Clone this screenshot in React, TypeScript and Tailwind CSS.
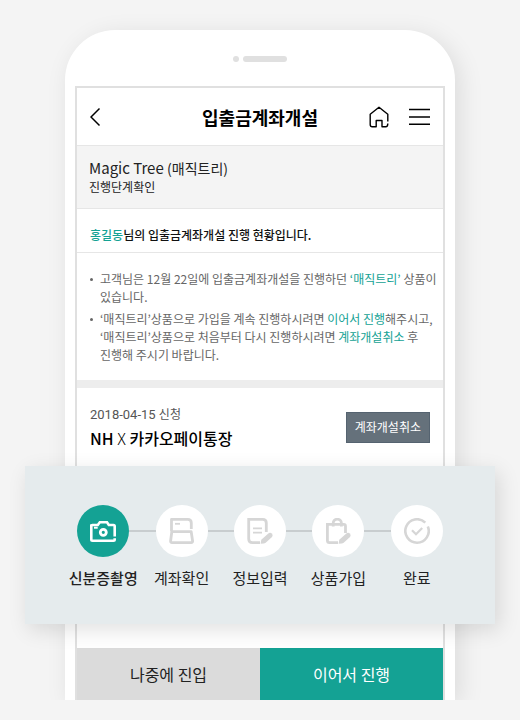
import type { ReactNode } from "react";

type Step = { label: string; icon: ReactNode; active?: boolean };

function CameraIcon() {
  return (
    <svg width="26" height="26" viewBox="0 0 26 26" fill="none" stroke="currentColor" strokeWidth="2.6" aria-hidden="true">
      <path d="M24.7 18.5V8.2Q24.7 7 23.5 7H18.8L17 4.3H9.8L7.8 7H2.6L1.3 7.4V21.5Q1.3 22.7 2.5 22.7H23.5Q24.7 22.7 24.7 21.5V20.3" />
      <circle cx="13.3" cy="14.3" r="3" strokeWidth="2.8" />
      <path d="M4 9.7H7.7" strokeWidth="2" />
    </svg>
  );
}

function AccountIcon() {
  return (
    <svg width="26" height="26" viewBox="0 0 26 26" fill="none" stroke="currentColor" strokeWidth="2.8" strokeLinejoin="round" aria-hidden="true">
      <path d="M22.3 11V5Q22.3 1.4 18.7 1.4H2.5V13.2" />
      <path d="M2.8 13.7H22.2L23.6 23Q23.8 24.6 22.2 24.6H3Q1.4 24.6 1.6 23Z" />
      <path d="M6 5.8H11" strokeWidth="1.8" />
    </svg>
  );
}

function DocumentIcon() {
  return (
    <svg width="26" height="26" viewBox="0 0 26 26" fill="none" stroke="currentColor" strokeWidth="2.8" aria-hidden="true">
      <path d="M19.3 14V5Q19.3 1.4 15.7 1.4H1.7V20.7Q1.7 24.6 5.5 24.6H13" />
      <path d="M6 10.3H15M6 14.7H15" strokeWidth="1.8" />
      <path d="M13.6 25.8L14.3 21.8L21 15.7Q23 14.2 24.8 15.4Q26.3 17.2 25 19L18.4 24.9Q17.6 25.6 13.6 25.8Z" fill="currentColor" stroke="none" />
    </svg>
  );
}

function BagIcon() {
  return (
    <svg width="26" height="26" viewBox="0 0 26 26" fill="none" stroke="currentColor" strokeWidth="2.8" aria-hidden="true">
      <path d="M20.5 15V8.2Q20.5 6.4 18.7 6.4H2.4V22.5Q2.4 24.6 4.5 24.6H13" />
      <path d="M8.2 8.5V5.2A4.1 4 0 0 1 16.4 5.2V8.5" />
      <path d="M13.6 25.8L14.3 21.8L21 15.7Q23 14.2 24.8 15.4Q26.3 17.2 25 19L18.4 24.9Q17.6 25.6 13.6 25.8Z" fill="currentColor" stroke="none" />
    </svg>
  );
}

function DoneIcon() {
  return (
    <svg width="26" height="26" viewBox="0 0 26 26" fill="none" stroke="currentColor" strokeWidth="2.6" aria-hidden="true">
      <path d="M21.3 4.7A11.7 11.7 0 1 0 23.8 8.4" />
      <path d="M8 12.3L12 16.3L18.2 10" strokeWidth="2.2" />
    </svg>
  );
}

const steps: Step[] = [
  { label: "신분증촬영", icon: <CameraIcon />, active: true },
  { label: "계좌확인", icon: <AccountIcon /> },
  { label: "정보입력", icon: <DocumentIcon /> },
  { label: "상품가입", icon: <BagIcon /> },
  { label: "완료", icon: <DoneIcon /> },
];

function Accent({ children }: { children: ReactNode }) {
  return <span className="text-[#14a294]">{children}</span>;
}

function Header() {
  return (
    <header className="grid h-[58px] grid-cols-[1fr_auto_1fr] items-center border-b border-[#e6e6e6] px-[13px] text-black">
      <button type="button" aria-label="뒤로" className="justify-self-start">
        <svg width="13" height="20" viewBox="0 0 13 20" fill="none" stroke="currentColor" strokeWidth="1.5" aria-hidden="true">
          <path d="M9.5 1.5L1 10L9.5 18.5" />
        </svg>
      </button>
      <h1 className="text-lg font-bold">입출금계좌개설</h1>
      <div className="flex items-center gap-[19px] justify-self-end">
        <button type="button" aria-label="홈">
          <svg width="20" height="22" viewBox="0 0 20 22" fill="none" stroke="currentColor" strokeWidth="1.4" strokeLinejoin="round" aria-hidden="true">
            <path d="M18.8 15.5V8.2L10 1.2L1.2 8.2V18.5Q1.2 20.7 3.2 20.7H7.2V14.5H13V20.7H16.8Q18.8 20.7 18.8 17.5" />
          </svg>
        </button>
        <button type="button" aria-label="메뉴">
          <svg width="22" height="22" viewBox="0 0 22 22" stroke="currentColor" strokeWidth="1.5" aria-hidden="true">
            <path d="M1 3.5H22M1 11H22M1 18.3H22" />
          </svg>
        </button>
      </div>
    </header>
  );
}

function Notice() {
  return (
    <ul className="flex list-none flex-col gap-1 border-b-8 border-[#ededed] pt-[17px] pr-1 pb-4 pl-[13px] text-xs leading-[18px] text-[#666]">
      <li className="flex gap-[7px]">
        <span aria-hidden="true" className="mt-2 size-[3px] shrink-0 rounded-full bg-[#666]" />
        <p>
          고객님은 12월 22일에 입출금계좌개설을 진행하던 <Accent>‘매직트리’</Accent> 상품이
          <br />
          있습니다.
        </p>
      </li>
      <li className="flex gap-[7px]">
        <span aria-hidden="true" className="mt-2 size-[3px] shrink-0 rounded-full bg-[#666]" />
        <p>
          ‘매직트리’상품으로 가입을 계속 진행하시려면 <Accent>이어서 진행</Accent>해주시고,
          <br />
          ‘매직트리’상품으로 처음부터 다시 진행하시려면 <Accent>계좌개설취소</Accent> 후
          <br />
          진행해 주시기 바랍니다.
        </p>
      </li>
    </ul>
  );
}

function StepPanel() {
  return (
    <section aria-label="진행 단계" className="relative z-10 -mx-[52px] bg-[#e5ebed] px-[39px] pt-[39px] pb-[34px] shadow-[4px_6px_20px_rgba(0,0,0,0.12)]">
      <ol className="grid grid-cols-5">
        {steps.map((step, i) => (
          <li key={step.label} className="flex flex-col items-center">
            <div className="flex w-full items-center">
              <span className={i === 0 ? "h-0.5 flex-1" : "h-0.5 flex-1 bg-[#c8cdcf]"} />
              <span
                className={
                  step.active
                    ? "grid size-[52px] place-items-center rounded-full bg-[#14a294] text-white"
                    : "grid size-[52px] place-items-center rounded-full bg-white text-[#d6d6d6]"
                }
              >
                {step.icon}
              </span>
              <span className={i === steps.length - 1 ? "h-0.5 flex-1" : "h-0.5 flex-1 bg-[#c8cdcf]"} />
            </div>
            <span
              className={
                step.active
                  ? "mt-2 text-[15px] leading-[25px] font-medium text-[#222]"
                  : "mt-2 text-[15px] leading-[25px] text-[#222]"
              }
            >
              {step.label}
            </span>
          </li>
        ))}
      </ol>
    </section>
  );
}

export default function App() {
  return (
    <div className="min-h-screen bg-[#f4f4f4] font-['Noto_Sans_CJK_KR',sans-serif]">
      <div className="overflow-hidden px-[65px] pt-[30px]">
        <div className="rounded-t-[50px] bg-white px-2.5 shadow-[5px_5px_24px_rgba(0,0,0,0.10)]">
          <div className="flex h-14 items-center justify-center gap-1 pt-0.5">
            <span className="size-1.5 rounded-full bg-[#e0e0e0]" />
            <span className="h-1.5 w-11 rounded-full bg-[#e0e0e0]" />
          </div>
          <main className="border-2 border-b-0 border-[#e0e0e0] bg-white">
            <Header />
            <div className="border-b border-[#e6e6e6] bg-[#f4f4f4] px-3 py-3 text-[#222]">
              <h2 className="text-[15px] leading-5">
                Magic Tree <span className="text-sm leading-5">(매직트리)</span>
              </h2>
              <p className="text-xs leading-[18px]">진행단계확인</p>
            </div>
            <p className="border-b border-[#e6e6e6] px-[13px] pt-[17px] pb-2 text-xs leading-[18px] font-medium text-[#111]">
              <Accent>홍길동</Accent>님의 입출금계좌개설 진행 현황입니다.
            </p>
            <Notice />
            <div className="flex h-[78px] items-center justify-between px-[13px]">
              <div className="pt-0.5">
                <p className="font-[Roboto,'Noto_Sans_CJK_KR',sans-serif] text-[13px] leading-5 text-[#555]">
                  2018-04-15 <span className="text-xs leading-5">신청</span>
                </p>
                <p className="text-base leading-[26px] font-medium text-black">
                  NH <span className="font-light">X</span> 카카오페이통장
                </p>
              </div>
              <button type="button" className="h-[31px] border border-[#556370] bg-[#65717b] px-2 text-xs text-white">
                계좌개설취소
              </button>
            </div>
            <StepPanel />
            <div className="grid grid-cols-2 pt-6">
              <button type="button" className="h-[52px] bg-[#dbdbdb] text-base text-[#222]">
                나중에 진입
              </button>
              <button type="button" className="h-[52px] bg-[#14a294] text-base text-white">
                이어서 진행
              </button>
            </div>
          </main>
        </div>
      </div>
    </div>
  );
}
